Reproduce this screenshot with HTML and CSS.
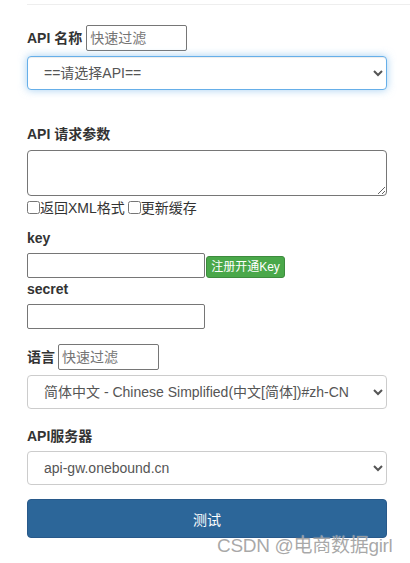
FILE: index.html
```html
<!DOCTYPE html>
<html>
<head>
<meta charset="utf-8">
<link rel="stylesheet" href="styles.css">
</head>
<body>
<div class="page">
  <div class="rule"></div>
  <div class="row name-row">
    <label class="lbl">API 名称</label>
    <input class="filter" placeholder="快速过滤">
  </div>
  <select class="sel focus"><option>==请选择API==</option></select>

  <div class="lbl params-lbl">API 请求参数</div>
  <textarea class="area"></textarea>
  <div class="checks">
    <label class="chk"><input type="checkbox">返回XML格式</label>
    <label class="chk"><input type="checkbox">更新缓存</label>
  </div>

  <div class="lbl key-lbl">key</div>
  <div class="row key-row">
    <input class="field">
    <button class="reg">注册开通Key</button>
  </div>
  <div class="lbl secret-lbl">secret</div>
  <input class="field secret">

  <div class="row lang-row">
    <label class="lbl">语言</label>
    <input class="filter" placeholder="快速过滤">
  </div>
  <select class="sel lang"><option>简体中文 - Chinese Simplified(中文[简体])#zh-CN</option></select>

  <div class="lbl server-lbl">API服务器</div>
  <select class="sel server"><option>api-gw.onebound.cn</option></select>

  <button class="test">测试</button>
</div>
<div class="wm">CSDN @电商数据girl</div>
</body>
</html>
```
FILE: styles.css
```css
* { box-sizing: border-box; }
html, body { margin: 0; padding: 0; background: #fff; }
body {
  font-family: "Liberation Sans", Arial, "Noto Sans CJK SC", sans-serif;
  font-size: 14px;
  color: #333;
  position: relative;
  height: 563px;
  overflow: hidden;
}
.page {
  padding: 4px 0 0 27px;
  width: 387px;
  display: flex;
  flex-direction: column;
  align-items: flex-start;
}
.rule {
  height: 1px;
  background: #eee;
  width: 383px;
  margin-bottom: 20px;
}
.row { display: flex; align-items: center; }
.lbl {
  font-weight: bold;
  font-size: 14px;
  line-height: 20px;
  color: #333;
}
.name-row .lbl { margin-right: 4px; }
.filter {
  width: 101px;
  height: 26px;
  border: 1px solid #767676;
  border-radius: 2px;
  padding: 1px 3px;
  font-family: inherit;
  font-size: 14px;
  color: #333;
}
.filter::placeholder { color: #757575; }
.sel {
  width: 360px;
  height: 34px;
  border: 1px solid #ccc;
  border-radius: 4px;
  padding: 6px 12px;
  font-family: inherit;
  font-size: 14px;
  color: #555;
  background: #fff;
}
.sel.focus {
  margin-top: 5px;
  border-color: #66afe9;
  box-shadow: inset 0 1px 1px rgba(0,0,0,.075), 0 0 8px rgba(102,175,233,.6);
}
.params-lbl { margin-top: 34px; }
.area {
  margin-top: 6px;
  width: 360px;
  height: 46px;
  border: 1px solid #767676;
  border-radius: 4px;
  resize: vertical;
  font-family: inherit;
}
.checks {
  display: flex;
  height: 20px;
  align-items: center;
  margin-top: 1px;
}
.chk {
  display: flex;
  align-items: center;
  font-size: 14px;
  color: #333;
  margin-right: 3px;
}
.chk input { margin: 0; width: 13px; height: 13px; }
.key-lbl { margin-top: 11px; }
.key-row { margin-top: 5px; align-items: flex-end; }
.field {
  width: 178px;
  height: 25px;
  border: 1px solid #767676;
  border-radius: 2px;
  font-family: inherit;
}
.reg {
  margin-left: 1px;
  height: 22px;
  width: 79px;
  padding: 0;
  border: 1px solid #3d8b3d;
  border-radius: 3px;
  background: #4aa84a;
  color: #fff;
  font-family: inherit;
  font-size: 12px;
  line-height: 20px;
}
.secret-lbl { margin-top: 1px; }
.secret { margin-top: 5px; }
.lang-row { margin-top: 15px; }
.lang-row .lbl { margin-right: 3px; }
.lang { margin-top: 5px; }
.server-lbl { margin-top: 17px; }
.server { margin-top: 5px; }
.test {
  margin-top: 14px;
  width: 360px;
  height: 39px;
  border: 1px solid #28598a;
  border-radius: 4px;
  background: #2c6699;
  color: #fff;
  font-family: inherit;
  font-size: 14px;
}
.wm {
  position: absolute;
  left: 217px;
  top: 530px;
  font-size: 19px;
  color: rgba(140,140,140,0.75);
  letter-spacing: -0.3px;
  text-shadow: 0 0 1px rgba(255,255,255,0.8);
}
```
